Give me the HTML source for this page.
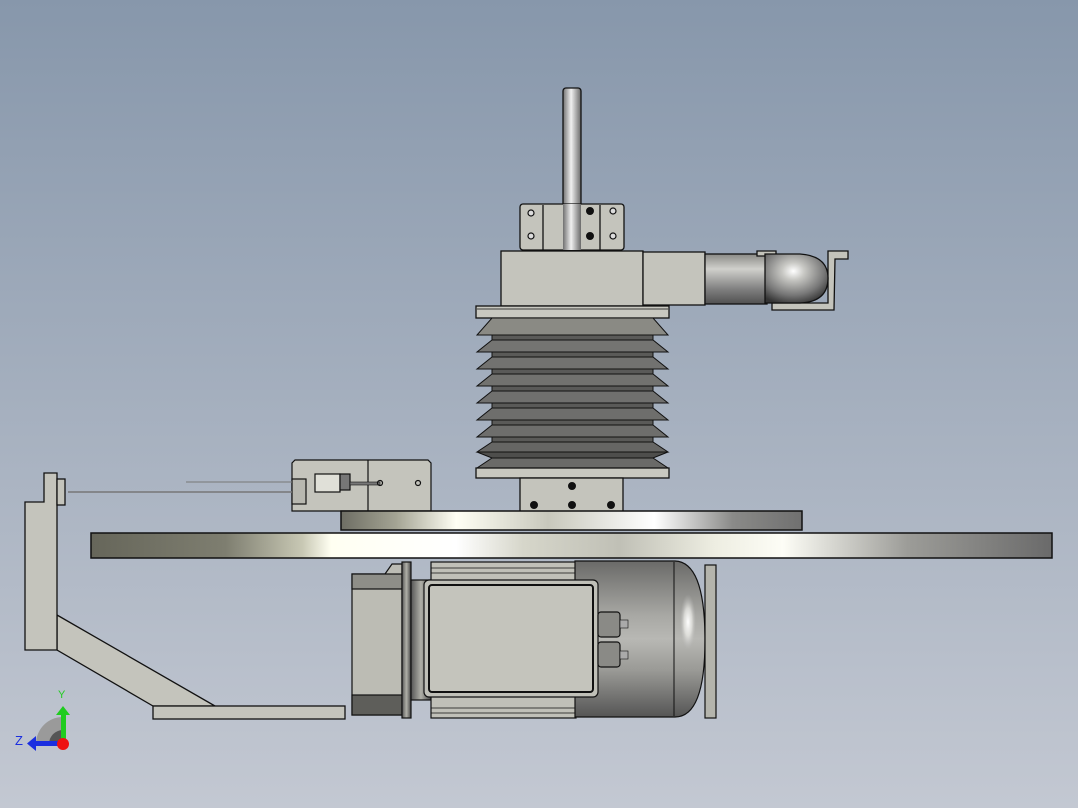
<!DOCTYPE html>
<html><head><meta charset="utf-8"><style>
html,body{margin:0;padding:0;width:1078px;height:808px;overflow:hidden;}
svg{display:block}
</style></head><body>
<svg width="1078" height="808" viewBox="0 0 1078 808" xmlns="http://www.w3.org/2000/svg" font-family="Liberation Sans, sans-serif">
<defs>
<linearGradient id="bg" x1="0" y1="0" x2="0" y2="1"><stop offset="0" stop-color="#8797ab"/><stop offset="1" stop-color="#c3c8d2"/></linearGradient>
<linearGradient id="rod" x1="0" x2="1"><stop offset="0" stop-color="#707070"/><stop offset="0.45" stop-color="#f0f0f0"/><stop offset="1" stop-color="#6a6a6a"/></linearGradient>
<linearGradient id="pipe" x1="0" y1="0" x2="0" y2="1"><stop offset="0" stop-color="#8a8a86"/><stop offset="0.3" stop-color="#d0d0cc"/><stop offset="0.7" stop-color="#808080"/><stop offset="1" stop-color="#505050"/></linearGradient>
<radialGradient id="elbow" cx="0.45" cy="0.35" r="0.7"><stop offset="0" stop-color="#ffffff"/><stop offset="0.25" stop-color="#c8c8c4"/><stop offset="0.7" stop-color="#777"/><stop offset="1" stop-color="#333"/></radialGradient>
<linearGradient id="disk" x1="0" x2="1"><stop offset="0" stop-color="#66665a"/><stop offset="0.14" stop-color="#7e7e70"/><stop offset="0.22" stop-color="#c8c8b4"/><stop offset="0.25" stop-color="#fffff2"/><stop offset="0.38" stop-color="#ffffff"/><stop offset="0.45" stop-color="#d6d6ca"/><stop offset="0.55" stop-color="#c0c0b6"/><stop offset="0.65" stop-color="#eeeee2"/><stop offset="0.72" stop-color="#fdfdf6"/><stop offset="0.85" stop-color="#9c9c98"/><stop offset="1" stop-color="#6a6a6a"/></linearGradient>
<linearGradient id="disk2" x1="0" x2="1"><stop offset="0" stop-color="#6e6e64"/><stop offset="0.12" stop-color="#a4a494"/><stop offset="0.25" stop-color="#fffff4"/><stop offset="0.45" stop-color="#c8c8bc"/><stop offset="0.68" stop-color="#ffffff"/><stop offset="0.85" stop-color="#8a8a88"/><stop offset="1" stop-color="#707070"/></linearGradient>
<linearGradient id="capv" x1="0" y1="0" x2="0" y2="1"><stop offset="0" stop-color="#6a6a68"/><stop offset="0.35" stop-color="#a8a8a4"/><stop offset="0.5" stop-color="#b8b8b4"/><stop offset="0.7" stop-color="#9a9a96"/><stop offset="1" stop-color="#555"/></linearGradient>
<radialGradient id="hl" cx="0.5" cy="0.5" r="0.5"><stop offset="0" stop-color="#ffffff"/><stop offset="0.5" stop-color="#eeeeea" stop-opacity="0.7"/><stop offset="1" stop-color="#bbb" stop-opacity="0"/></radialGradient>
<linearGradient id="flange" x1="0" x2="1"><stop offset="0" stop-color="#555"/><stop offset="0.5" stop-color="#b0b0a8"/><stop offset="1" stop-color="#444"/></linearGradient>
</defs>
<rect width="1078" height="808" fill="url(#bg)"/>

<g stroke="#111" stroke-width="1.3">
<rect x="563" y="88" width="18" height="164" fill="url(#rod)" rx="3"/>
<rect x="520" y="204" width="104" height="46" fill="#c4c4bc" rx="3"/>
<line x1="543" y1="205" x2="543" y2="250"/><line x1="600" y1="205" x2="600" y2="250"/>
<rect x="563" y="204" width="18" height="46" fill="url(#rod)" stroke="none"/>
<rect x="501" y="251" width="142" height="55" fill="#c4c4bc"/>
<rect x="643" y="252" width="62" height="53" fill="#c4c4bc"/>
<rect x="705" y="254" width="62" height="50" fill="url(#pipe)"/>
<path d="M757 251 L776 251 L776 256 L757 256Z" fill="#c4c4bc"/>
<path d="M828 251 L848 251 L848 259 L835 259 L834 310 L772 310 L772 303 L828 303Z" fill="#c4c4bc"/>
<path d="M765 254 L800 254 Q828 256 828 278 Q828 302 800 303 L765 303Z" fill="url(#elbow)"/>
<rect x="476" y="306" width="193" height="12" fill="#c8c8c0"/>
<line x1="477" y1="309" x2="668" y2="309" stroke-width="0.8"/>
</g>
<g stroke="#111" stroke-width="1">
<polygon points="492,318 653,318 668,335 477,335" fill="#8a8a84"/>
<rect x="492" y="335" width="161" height="5" fill="#5a5a58"/>
<polygon points="492,340 653,340 668,352 477,352" fill="#747472"/>
<rect x="492" y="352" width="161" height="5" fill="#5a5a58"/>
<polygon points="492,357 653,357 668,369 477,369" fill="#727270"/>
<rect x="492" y="369" width="161" height="5" fill="#5a5a58"/>
<polygon points="492,374 653,374 668,386 477,386" fill="#72726f"/>
<rect x="492" y="386" width="161" height="5" fill="#5a5a58"/>
<polygon points="492,391 653,391 668,403 477,403" fill="#70706e"/>
<rect x="492" y="403" width="161" height="5" fill="#5a5a58"/>
<polygon points="492,408 653,408 668,420 477,420" fill="#6e6e6c"/>
<rect x="492" y="420" width="161" height="5" fill="#5a5a58"/>
<polygon points="492,425 653,425 668,437 477,437" fill="#6e6e6c"/>
<rect x="492" y="437" width="161" height="5" fill="#5a5a58"/>
<polygon points="492,442 653,442 668,452 477,452" fill="#666664"/>
<polygon points="477,452 668,452 653,458 492,458" fill="#4e4e4c"/>
<polygon points="492,458 653,458 668,468 477,468" fill="#6a6a68"/>
</g>
<g stroke="#111" stroke-width="1.3">
<rect x="476" y="468" width="193" height="10" fill="#c8c8c0"/>
<rect x="520" y="478" width="103" height="34" fill="#c4c4bc"/>
</g>
<g fill="#111" stroke="#111">
<circle cx="531" cy="213" r="3" fill="#ddd" stroke-width="1.2"/><circle cx="590" cy="211" r="3.5"/><circle cx="613" cy="211" r="3" fill="#ddd" stroke-width="1.2"/>
<circle cx="531" cy="236" r="3" fill="#ddd" stroke-width="1.2"/><circle cx="590" cy="236" r="3.5"/><circle cx="613" cy="236" r="3" fill="#ddd" stroke-width="1.2"/>
<circle cx="572" cy="486" r="3.5"/><circle cx="534" cy="505" r="3.5"/><circle cx="572" cy="505" r="3.5"/><circle cx="611" cy="505" r="3.5"/>
</g>

<g stroke="#111" stroke-width="1.2" fill="#c4c4bc">
<path d="M295 460 L428 460 L431 463 L431 511 L292 511 L292 463Z"/>
<line x1="368" y1="460" x2="368" y2="511"/>
<rect x="292" y="479" width="14" height="25" fill="#b8b8b0"/>
<rect x="315" y="474" width="25" height="18" fill="#e0e0d8"/>
<rect x="340" y="474" width="10" height="16" fill="#777"/>
<rect x="350" y="482" width="30" height="3" fill="#777" stroke-width="0.6"/>
<circle cx="380" cy="483" r="2.5" fill="none"/><circle cx="418" cy="483" r="2.5" fill="none"/>
</g>
<line x1="186" y1="482" x2="292" y2="482" stroke="#777" stroke-width="1"/>
<line x1="68" y1="492" x2="292" y2="492" stroke="#777" stroke-width="1.5"/>

<g stroke="#111" stroke-width="1.5">
<rect x="341" y="511" width="461" height="19" fill="url(#disk2)"/>
<rect x="91" y="533" width="961" height="25" fill="url(#disk)"/>
</g>

<g stroke="#111" stroke-width="1.2">
<path d="M352 574 L385 574 L392 564 L402 564 L402 715 L352 715Z" fill="#bcbcb4"/>
<rect x="352" y="574" width="50" height="15" fill="#8e8e88"/>
<rect x="352" y="695" width="50" height="20" fill="#5e5e5a"/>
<rect x="402" y="562" width="9" height="156" fill="url(#flange)"/>
<rect x="411" y="580" width="20" height="120" fill="url(#flange)"/>
<rect x="431" y="562" width="145" height="156" fill="#c0c0b8"/>
<line x1="431" y1="568" x2="576" y2="568" stroke-width="0.8"/><line x1="431" y1="573" x2="576" y2="573" stroke-width="0.8"/>
<line x1="431" y1="708" x2="576" y2="708" stroke-width="0.8"/><line x1="431" y1="713" x2="576" y2="713" stroke-width="0.8"/>
<path d="M575 561 L675 561 Q705 562 705 640 Q705 717 675 717 L575 717Z" fill="url(#capv)"/>
<line x1="674" y1="562" x2="674" y2="716" stroke-width="1"/>
<ellipse cx="688" cy="622" rx="8" ry="28" fill="url(#hl)" stroke="none"/>
<rect x="705" y="565" width="11" height="153" fill="#b4b4ac"/>
<rect x="424" y="580" width="174" height="117" rx="5" fill="#c0c0b8"/>
<rect x="429" y="585" width="164" height="107" rx="3" fill="#c4c4bc" stroke-width="2"/>
<rect x="598" y="612" width="22" height="25" rx="3" fill="#8a8a86"/>
<rect x="598" y="642" width="22" height="25" rx="3" fill="#8a8a86"/>
<rect x="620" y="620" width="8" height="8" fill="#aaa" stroke-width="0.6"/>
<rect x="620" y="651" width="8" height="8" fill="#aaa" stroke-width="0.6"/>
</g>

<g stroke="#111" stroke-width="1.3" fill="#c4c4bc">
<path d="M57 615 L215 706 L153 706 L57 650Z"/>
<path d="M44 473 L57 473 L57 650 L25 650 L25 502 L44 502Z"/>
<rect x="57" y="479" width="8" height="26"/>
<rect x="153" y="706" width="192" height="13"/>
</g>

<path d="M63 744 L36 744 A27 27 0 0 1 63 717Z" fill="#9a9a9a"/>
<path d="M63 744 L49 744 A14 14 0 0 1 63 730Z" fill="#555"/>
<rect x="61" y="714" width="5" height="30" fill="#1fcc1f"/>
<polygon points="56,715 63,706 70,715" fill="#1fcc1f"/>
<rect x="35" y="741" width="28" height="5" fill="#1a2ee0"/>
<polygon points="36,736 27,743.5 36,751" fill="#1a2ee0"/>
<circle cx="63" cy="744" r="6" fill="#ee1111"/>
<text x="58" y="698" font-size="11" fill="#22cc22">Y</text>
<text x="15" y="745" font-size="13" fill="#1a2ee0">Z</text>
</svg>
</body></html>
